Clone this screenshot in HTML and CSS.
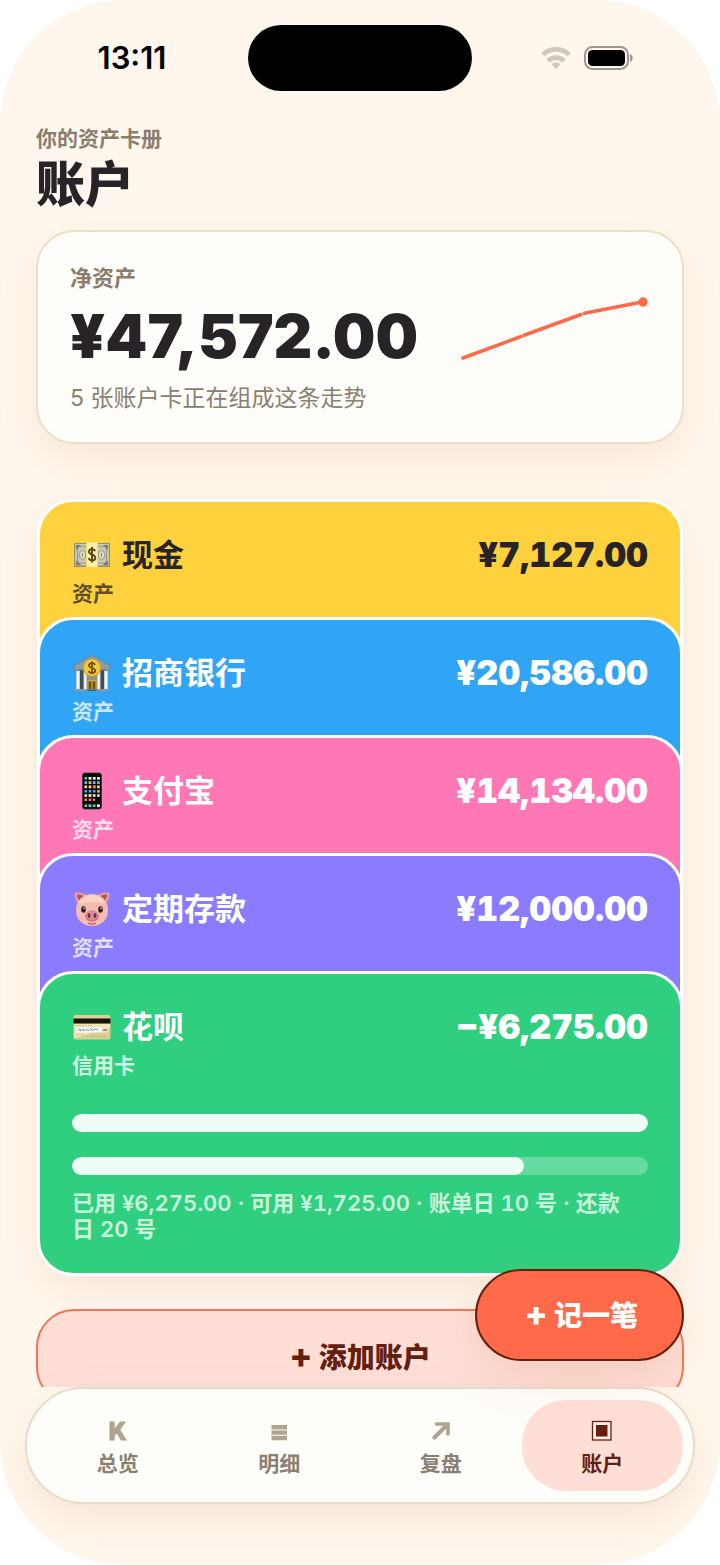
FILE: index.html
```html
<!DOCTYPE html>
<html lang="zh-CN">
<head>
<meta charset="utf-8">
<meta name="viewport" content="width=device-width, initial-scale=1">
<title>账户</title>
<link rel="stylesheet" href="styles.css">
</head>
<body>
<div class="phone">
  <header class="status">
    <time class="status-time">13:11</time>
    <div class="island"></div>
    <div class="status-icons">
      <svg class="wifi" viewBox="0 0 30 22" width="30" height="22" aria-hidden="true">
        <g fill="none" stroke="#cfc7bc" stroke-width="4.600">
          <path d="M1.800 7.600C9 .6 21 .6 28.200 7.600"/>
          <path d="M6.800 13.800C11.300 9.500 18.700 9.500 23.200 13.800"/>
        </g>
        <path fill="#cfc7bc" d="M15 22l-4.600-4.800c2.200-2.300 7-2.300 9.200 0z"/>
      </svg>
      <svg class="battery" viewBox="0 0 50 24" width="50" height="24" aria-hidden="true">
        <rect x="1" y="1" width="43" height="22" rx="7.500" fill="none" stroke="#9b968f" stroke-width="2"/>
        <rect x="4" y="4" width="37" height="16" rx="4.500" fill="#000"/>
        <path fill="#9b968f" d="M46 8c3.500 1.200 3.500 6.800 0 8z"/>
      </svg>
    </div>
  </header>

  <main class="content">
    <p class="eyebrow">你的资产卡册</p>
    <h1 class="title">账户</h1>

    <section class="networth">
      <div class="networth-text">
        <h2 class="networth-label">净资产</h2>
        <p class="networth-amount">¥47,572.00</p>
        <p class="networth-note">5 张账户卡正在组成这条走势</p>
      </div>
      <svg class="spark" viewBox="0 0 192 82" width="192" height="82" role="img" aria-label="净资产走势">
        <g fill="none" stroke="#ff6b4a" stroke-width="3.600" stroke-linecap="round">
          <path d="M5 61L63 39.500"/><path d="M66 38.300L123 17.500"/><path d="M126.500 16.300L184 5"/>
        </g>
        <circle cx="185" cy="5" r="4.700" fill="#ff6b4a"/>
      </svg>
    </section>

    <section class="stack" aria-label="账户列表">
      <article class="card card-cash">
        <div class="card-head">
          <svg class="emoji" viewBox="0 0 40 40" width="40" height="40" aria-hidden="true">
            <rect x="2" y="8" width="36" height="24" rx="1" fill="#8f8d78"/>
            <rect x="3" y="9" width="34" height="21.500" fill="#c9c8b4"/>
            <rect x="5.500" y="11.500" width="29" height="16.500" fill="none" stroke="#9c9a86" stroke-width="1"/>
            <path fill="#7b7966" d="M4 10h5l-5 5zM36 10h-5l5 5zM4 30h5l-5-5zM36 30h-5l5-5z"/>
            <ellipse cx="10.500" cy="20" rx="3" ry="4.300" fill="#dddcca" stroke="#8d8b76" stroke-width=".8"/>
            <ellipse cx="29.500" cy="20" rx="3" ry="4.300" fill="#dddcca" stroke="#8d8b76" stroke-width=".8"/>
            <path d="M10.500 18v4M29.500 18v4" stroke="#8d8b76"/>
            <rect x="14" y="7.500" width="12" height="24.500" fill="#fff2a8"/>
            <path d="M14.500 8v23.500M25.500 8v23.500" stroke="#f3d472" stroke-width="1"/>
            <path d="M23 16.200c-.8-3-6-2.600-6 .5 0 3.700 6.300 2.200 6.300 6 0 3.500-5.800 3.700-6.700.4M20 12v15.500" fill="none" stroke="#5b4515" stroke-width="1.900"/>
          </svg>
          <h3 class="card-name">现金</h3>
          <p class="card-amount">¥7,127.00</p>
        </div>
        <p class="card-kind">资产</p>
      </article>

      <article class="card card-bank">
        <div class="card-head">
          <svg class="emoji" viewBox="0 0 40 40" width="40" height="40" aria-hidden="true">
            <path fill="#84949c" d="M4 17h32v19H4z"/>
            <path fill="#3c4f5b" d="M8 17h4v19H8zM28 17h4v19h-4z"/>
            <path fill="#8d9ca2" stroke="#6d7c84" stroke-width=".8" d="M2 12.500L20 2l18 10.500V17H2z"/>
            <path fill="#c5cdd0" d="M4 18h4v18H4zM11.500 18H15v18h-3.500zM25 18h3.500v18H25zM32 18h4v18h-4z"/>
            <path fill="#f4f8f8" d="M5 18h1.800v18H5zM12.300 18h1.600v18h-1.600zM26 18h1.600v18H26zM33.200 18H35v18h-1.800z"/>
            <path fill="#6c5018" d="M15.500 27h9v10h-9z"/>
            <path d="M16 37v-9.400h8V37M20 28v9" fill="none" stroke="#d8a938" stroke-width="1.300"/>
            <path fill="#8c999f" d="M2 36h36v2H2z"/><path fill="#4b5e68" d="M15.500 36.500h9V38h-9z"/>
            <circle cx="20" cy="15" r="9" fill="#d9a01c"/><circle cx="20" cy="14.500" r="8.100" fill="#f5c93c"/>
            <path d="M23 12c-.8-2.700-6-2.400-6 .4 0 3.300 6.200 2 6.200 5.200 0 3.200-5.600 3.300-6.500.4M20 8.500V21" fill="none" stroke="#6b4c10" stroke-width="1.700"/>
          </svg>
          <h3 class="card-name">招商银行</h3>
          <p class="card-amount">¥20,586.00</p>
        </div>
        <p class="card-kind">资产</p>
      </article>

      <article class="card card-alipay">
        <div class="card-head">
          <svg class="emoji" viewBox="0 0 40 40" width="40" height="40" aria-hidden="true">
            <rect x="10.500" y="2" width="19" height="36" rx="2.200" fill="#08080b" stroke="#37343b" stroke-width=".8"/>
            <g fill="none" stroke-width="2.600" stroke-dasharray="2.600 1.600">
              <path stroke="#4cd964" d="M12.500 7.300h15.200"/><path stroke="#ecf1f6" d="M16.700 7.300h11"/>
              <path stroke="#5ac8fa" d="M12.500 11.600h15.200"/><path stroke="#ff9a4d" d="M16.700 11.600h2.800"/>
              <path stroke="#ffe47b" d="M12.500 15.900h15.200"/><path stroke="#ff625c" d="M20.900 15.900h2.800"/>
              <path stroke="#44a8f5" d="M12.500 20.200h15.200"/><path stroke="#ff9b37" d="M25.100 20.200h2.800"/>
              <path stroke="#f4f4f4" d="M12.500 24.500h15.200"/><path stroke="#ffd746" d="M16.700 24.500h2.800"/>
              <path stroke="#ff735f" d="M12.500 28.800h10.600"/>
              <path stroke="#5bdc73" d="M12.500 34.800h15.200"/><path stroke="#4fc3ff" d="M16.700 34.800h2.800"/><path stroke="#fff" d="M25.100 34.800h2.800"/>
            </g>
          </svg>
          <h3 class="card-name">支付宝</h3>
          <p class="card-amount">¥14,134.00</p>
        </div>
        <p class="card-kind">资产</p>
      </article>

      <article class="card card-deposit">
        <div class="card-head">
          <svg class="emoji" viewBox="0 0 40 40" width="40" height="40" aria-hidden="true">
            <path fill="#e79c9a" d="M2.500 4C7 2.500 14 4.500 16 8L7 17C5 12 1.500 8 2.500 4zM37.500 4C33 2.500 26 4.500 24 8l9 9c2-5 5.500-9 4.500-13z"/>
            <path fill="#a85459" d="M5 5.500c4 0 7 1.500 9 4l-6 5C7.500 11 5 9 5 5.500zM35 5.500c-4 0-7 1.500-9 4l6 5c.5-3.500 3-5.500 3-9z"/>
            <path fill="#f6bbb1" d="M20 5c10 0 16 7 16 16.500C36 31 29 37 20 37S4 31 4 21.500C4 12 10 5 20 5z"/>
            <path fill="#fdd3c7" d="M20 6c7 0 12 4 13 9-8-3-18-3-26 0 1-5 6-9 13-9z"/>
            <ellipse cx="11.500" cy="20.500" rx="2.300" ry="3.200" fill="#29211f"/><ellipse cx="28.500" cy="20.500" rx="2.300" ry="3.200" fill="#29211f"/>
            <circle cx="12" cy="19.300" r=".8" fill="#fff"/><circle cx="29" cy="19.300" r=".8" fill="#fff"/>
            <ellipse cx="20" cy="27" rx="7" ry="5.500" fill="#c9727c"/><ellipse cx="20" cy="26.200" rx="6.500" ry="4.700" fill="#dd8f97"/>
            <ellipse cx="17" cy="26.500" rx="1.500" ry="2.500" fill="#742e45"/><ellipse cx="23" cy="26.500" rx="1.500" ry="2.500" fill="#742e45"/>
            <path d="M16 34c2.500 1.400 5.500 1.400 8 0" fill="none" stroke="#b85f68" stroke-width="1.300"/>
          </svg>
          <h3 class="card-name">定期存款</h3>
          <p class="card-amount">¥12,000.00</p>
        </div>
        <p class="card-kind">资产</p>
      </article>

      <article class="card card-credit">
        <div class="card-head">
          <svg class="emoji" viewBox="0 0 40 40" width="40" height="40" aria-hidden="true">
            <rect x="1.500" y="8" width="37" height="24.500" rx="2" fill="#dccf93"/>
            <path fill="#efe6b8" d="M2 17h36v4L2 31z"/>
            <path fill="#17130d" d="M1.500 11.500h37v5h-37z"/>
            <rect x="4" y="20.500" width="25" height="5" fill="#fafafa"/><rect x="29" y="20.500" width="7" height="5" fill="#eee9d4"/>
            <path d="M5.500 24l2.500-2 .5 2 3-2 .5 2 2-1.500 3 1 2-2 1 2 3-1.500 3 1" fill="none" stroke="#6d78b4" stroke-width=".8"/>
            <path d="M31 23h4" stroke="#433a30"/><path d="M4 18.500h16M4 27.500h9M14 29.500h21" stroke="#b8ab79" stroke-width=".7" stroke-dasharray="2 1"/>
          </svg>
          <h3 class="card-name">花呗</h3>
          <p class="card-amount">−¥6,275.00</p>
        </div>
        <p class="card-kind">信用卡</p>
        <div class="meters">
          <progress class="meter" max="8000" value="8000" aria-label="总额度"></progress>
          <progress class="meter" max="8000" value="6275" aria-label="已用额度"></progress>
        </div>
        <p class="card-detail">已用 ¥6,275.00 · 可用 ¥1,725.00 · 账单日 10 号 · 还款日 20 号</p>
      </article>
    </section>

    <button class="add" type="button">+ 添加账户</button>
  </main>

  <div class="dock">
    <button class="fab" type="button">+ 记一笔</button>
    <nav class="tabs" aria-label="主导航">
      <a class="tab" href="#overview">
        <svg class="tab-icon" viewBox="0 0 24 24" width="24" height="24" aria-hidden="true"><path fill="currentColor" d="M3.500 2.500h5.200v7L14 2.500h6l-5.600 8.300L21 21.500h-6.200l-4-7-2.100 2.600v4.400H3.500z"/></svg>
        总览
      </a>
      <a class="tab" href="#details">
        <svg class="tab-icon" viewBox="0 0 24 24" width="24" height="24" aria-hidden="true"><path fill="currentColor" d="M4.500 6h15.500v4.400H4.500zM4.500 11.400h15.500v4.400H4.500zM4.500 16.800h15.500v4.400H4.500z"/></svg>
        明细
      </a>
      <a class="tab" href="#review">
        <svg class="tab-icon" viewBox="0 0 24 24" width="24" height="24" aria-hidden="true"><path fill="none" stroke="currentColor" stroke-width="4.200" stroke-linecap="round" d="M5.500 18.500L17 7"/><path fill="none" stroke="currentColor" stroke-width="3.600" stroke-linecap="round" d="M7.500 5H19V15"/></svg>
        复盘
      </a>
      <a class="tab tab-active" href="#accounts" aria-current="page">
        <svg class="tab-icon" viewBox="0 0 24 24" width="24" height="24" aria-hidden="true"><rect x="2.500" y="2.500" width="18.500" height="18.500" fill="#fff0ea" stroke="currentColor" stroke-width="1.300"/><rect x="6" y="6" width="11.500" height="11.500" fill="currentColor"/></svg>
        账户
      </a>
    </nav>
  </div>
</div>
</body>
</html>
```
FILE: styles.css
```css
* {
  box-sizing: border-box;
}

body {
  margin: 0;
  background: #fff;
  color: #272326;
  font-family: Inter, "Noto Sans CJK SC", sans-serif;
}

h1,
h2,
h3,
p {
  margin: 0;
}

button {
  font: inherit;
  cursor: pointer;
}

.phone {
  display: flex;
  flex-direction: column;
  height: 100vh;
  overflow: hidden;
  border-radius: 124px;
  background: #fff7ed;
}

.status {
  display: grid;
  grid-template-columns: 1fr 224px 1fr;
  align-items: center;
  flex: none;
  padding: 25px 0 34px;
}

.status-time {
  padding-left: 16px;
  color: #000;
  font-size: 31px;
  font-weight: 600;
  line-height: 36px;
  text-align: center;
}

.island {
  height: 66px;
  border-radius: 33px;
  background: #000;
}

.status-icons {
  display: flex;
  align-items: center;
  justify-content: center;
  gap: 13px;
  padding-right: 18px;
}

.content {
  flex: 1;
  min-height: 0;
  overflow: hidden;
  padding: 0 36px;
}

.eyebrow {
  color: #8b7d6c;
  font-size: 21px;
  font-weight: 700;
  line-height: 28px;
}

.title {
  font-size: 49px;
  font-weight: 900;
  line-height: 64px;
}

.networth {
  display: flex;
  align-items: center;
  justify-content: space-between;
  margin-top: 13px;
  padding: 30px 32px 28px;
  border: 2px solid #ecdfc9;
  border-radius: 38px;
  background: #fffdf9;
  box-shadow: 0 16px 40px rgba(205, 140, 100, 0.14);
}

.networth-label {
  color: #8b7d6c;
  font-size: 22px;
  font-weight: 700;
  line-height: 32px;
}

.networth-amount {
  margin: 4px 0 8px;
  font-size: 60px;
  font-weight: 900;
  line-height: 76px;
}

.networth-note {
  color: #8b8070;
  font-size: 23px;
  line-height: 32px;
}

.spark {
  flex: none;
}

.stack {
  margin: 55px 1px 33px;
  border-radius: 38px;
  box-shadow: 0 16px 40px rgba(205, 140, 100, 0.14);
}

.card {
  padding: 35px 32px 87px;
  border: 3px solid #fff;
  border-radius: 36px;
  color: #fff;
}

.card + .card {
  margin-top: -80px;
}

.card-head {
  display: flex;
  align-items: center;
  height: 36px;
}

.emoji {
  flex: none;
  margin-right: 10px;
}

.card-name {
  font-size: 31px;
  font-weight: 700;
  line-height: 36px;
}

.card-amount {
  margin-left: auto;
  font-size: 34px;
  font-weight: 900;
  line-height: 36px;
  font-variant-numeric: tabular-nums;
}

.card-kind {
  margin-top: 8px;
  font-size: 21px;
  font-weight: 700;
  line-height: 26px;
  opacity: 0.75;
}

.card-cash {
  background: #ffd23d;
  color: #272326;
}

.card-bank {
  background: #30a5f5;
}

.card-alipay {
  background: #ff78b5;
}

.card-deposit {
  background: #8b7bff;
}

.card-credit {
  padding-bottom: 31px;
  background: #30cf80;
}

.meters {
  display: grid;
  gap: 25px;
  margin-top: 35px;
}

.meter {
  display: block;
  width: 100%;
  height: 18px;
  overflow: hidden;
  border: 0;
  border-radius: 9px;
  appearance: none;
  background: rgba(255, 255, 255, 0.25);
}

.meter::-webkit-progress-bar {
  border-radius: 9px;
  background: transparent;
}

.meter::-webkit-progress-value {
  border-radius: 9px;
  background: rgba(255, 255, 255, 0.9);
}

.card-detail {
  margin-top: 15px;
  padding-right: 16px;
  color: #c8f3dc;
  font-size: 22px;
  font-weight: 600;
  line-height: 26px;
  font-variant-numeric: tabular-nums;
}

.add {
  display: block;
  width: 100%;
  padding: 26px;
  border: 2px solid #f57556;
  border-radius: 38px;
  background: #ffded6;
  color: #64200f;
  font-size: 28px;
  font-weight: 800;
  line-height: 38px;
}

.dock {
  position: relative;
  flex: none;
  padding: 0 25px 61px;
}

.fab {
  position: absolute;
  right: 36px;
  bottom: 204px;
  padding: 24px 44px 24px 48px;
  border: 2px solid #64200f;
  border-radius: 46px;
  background: #ff6b4a;
  box-shadow: 0 16px 40px rgba(205, 140, 100, 0.2);
  color: #fff;
  font-size: 28px;
  font-weight: 800;
  line-height: 38px;
}

.add::first-letter,
.fab::first-letter {
  font-size: 34px;
}

.tabs {
  display: grid;
  grid-template-columns: repeat(4, 1fr);
  padding: 11px 10px;
  border: 2px solid #e8dcc8;
  border-radius: 58px;
  background: #fffdf9;
  box-shadow: 0 16px 40px rgba(205, 140, 100, 0.16);
}

.tab {
  display: flex;
  flex-direction: column;
  align-items: center;
  gap: 7px;
  padding: 19px 0 13px;
  border-radius: 44px;
  color: #8b8070;
  font-size: 21px;
  font-weight: 600;
  line-height: 28px;
  text-decoration: none;
}

.tab-icon {
  color: #aea491;
}

.tab-active {
  background: #ffded6;
  color: #64200f;
}

.tab-active .tab-icon {
  color: #64200f;
}
```
